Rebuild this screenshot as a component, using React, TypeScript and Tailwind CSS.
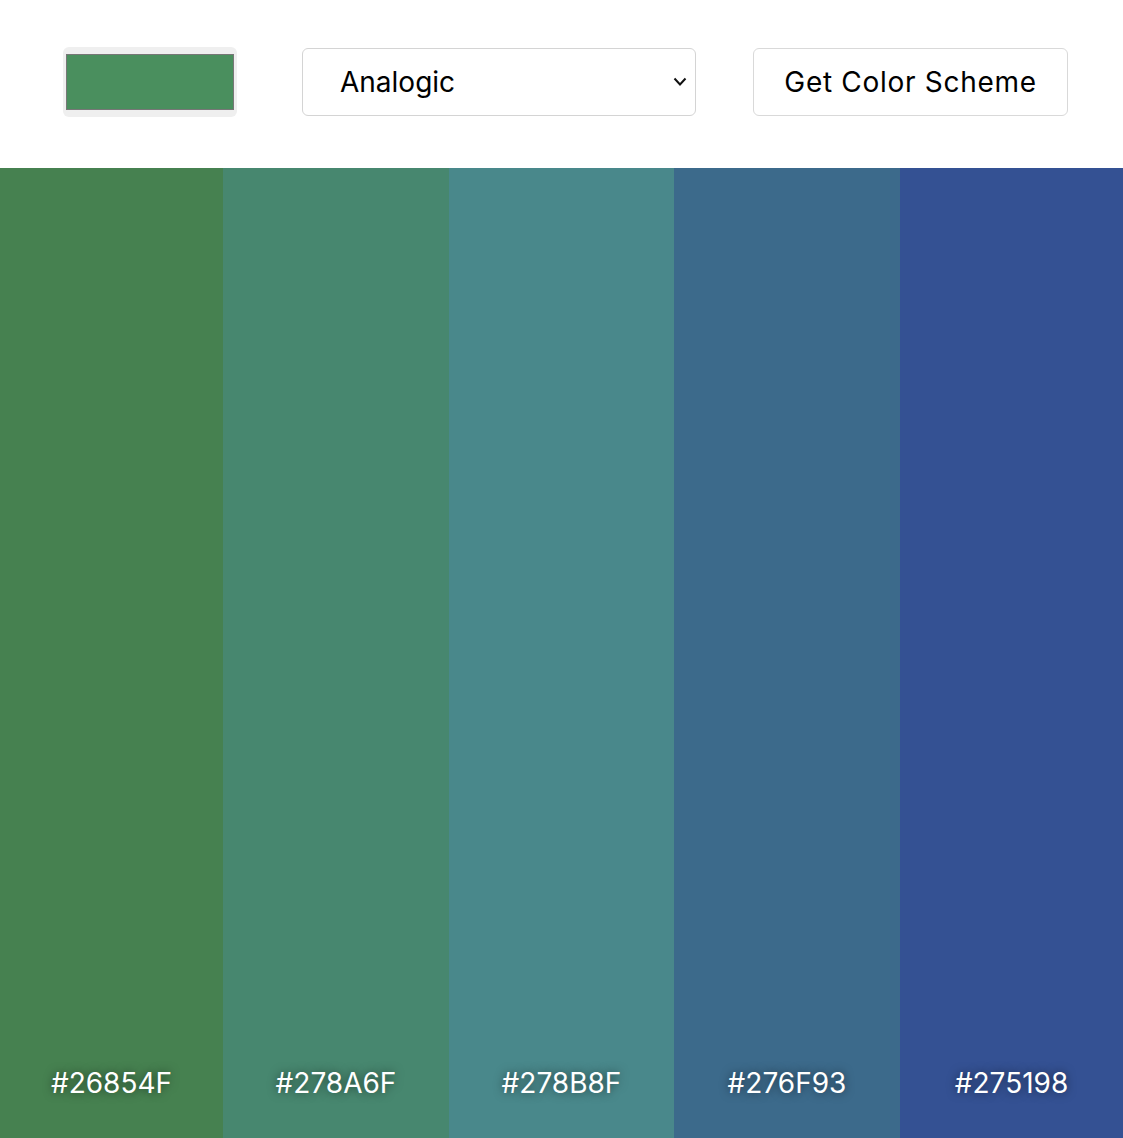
import React, { useState } from "react";

const App = () => {
  const [mode, setMode] = useState("analogic");

  const colors = [
    { id: 1, hex: "#26854F", shown: "#468150", width: "w-[223px]" },
    { id: 2, hex: "#278A6F", shown: "#47876F", width: "w-[226px]" },
    { id: 3, hex: "#278B8F", shown: "#49888B", width: "w-[225px]" },
    { id: 4, hex: "#276F93", shown: "#3C6A8B", width: "w-[226px]" },
    { id: 5, hex: "#275198", shown: "#345193", width: "flex-1" },
  ];

  return (
    <div className="w-full min-h-[1138px] bg-white flex flex-col font-['Inter',sans-serif]">
      {/* Header */}
      <div className="h-[168px] flex items-center pl-[63px]">
        {/* colour picker */}
        <div className="w-[174px] h-[70px] bg-[#efefef] rounded-md pt-[7px] pb-[7px] px-[3px] mt-[-4px]">
          <div className="w-full h-full bg-[#4a8f5e] border border-[#777777]"></div>
        </div>

        {/* scheme select */}
        <div className="relative ml-[65px] mt-[-4px]">
          <select
            value={mode}
            onChange={(e) => setMode(e.target.value)}
            className="appearance-none w-[394px] h-[68px] border border-[#d4d4d4] rounded-md pl-[37px] text-[28px] text-black bg-white outline-none"
          >
            <option value="monochrome">Monochrome</option>
            <option value="analogic">Analogic</option>
            <option value="complement">Complement</option>
            <option value="triad">Triad</option>
          </select>
          <svg
            className="absolute right-[9px] top-[29px] pointer-events-none"
            width="14"
            height="10"
            viewBox="0 0 14 10"
            fill="none"
          >
            <path d="M1.5 1.5 L7 7.5 L12.5 1.5" stroke="#111" strokeWidth="2" />
          </svg>
        </div>

        {/* button */}
        <button className="ml-[57px] mt-[-4px] w-[315px] h-[68px] border border-[#d9d9d9] rounded-md bg-white text-[28px] tracking-[0.7px] text-black">
          Get Color Scheme
        </button>
      </div>

      {/* Columns */}
      <div className="flex h-[970px]">
        {colors.map((c) => (
          <div
            key={c.id}
            className={`${c.width} flex flex-col justify-end items-center pb-[38px]`}
            style={{ backgroundColor: c.shown }}
          >
            <p className="text-white text-[28px] leading-[34px] [text-shadow:0_0_10px_rgba(0,0,0,0.55)]">
              {c.hex}
            </p>
          </div>
        ))}
      </div>
    </div>
  );
};

export default App;
